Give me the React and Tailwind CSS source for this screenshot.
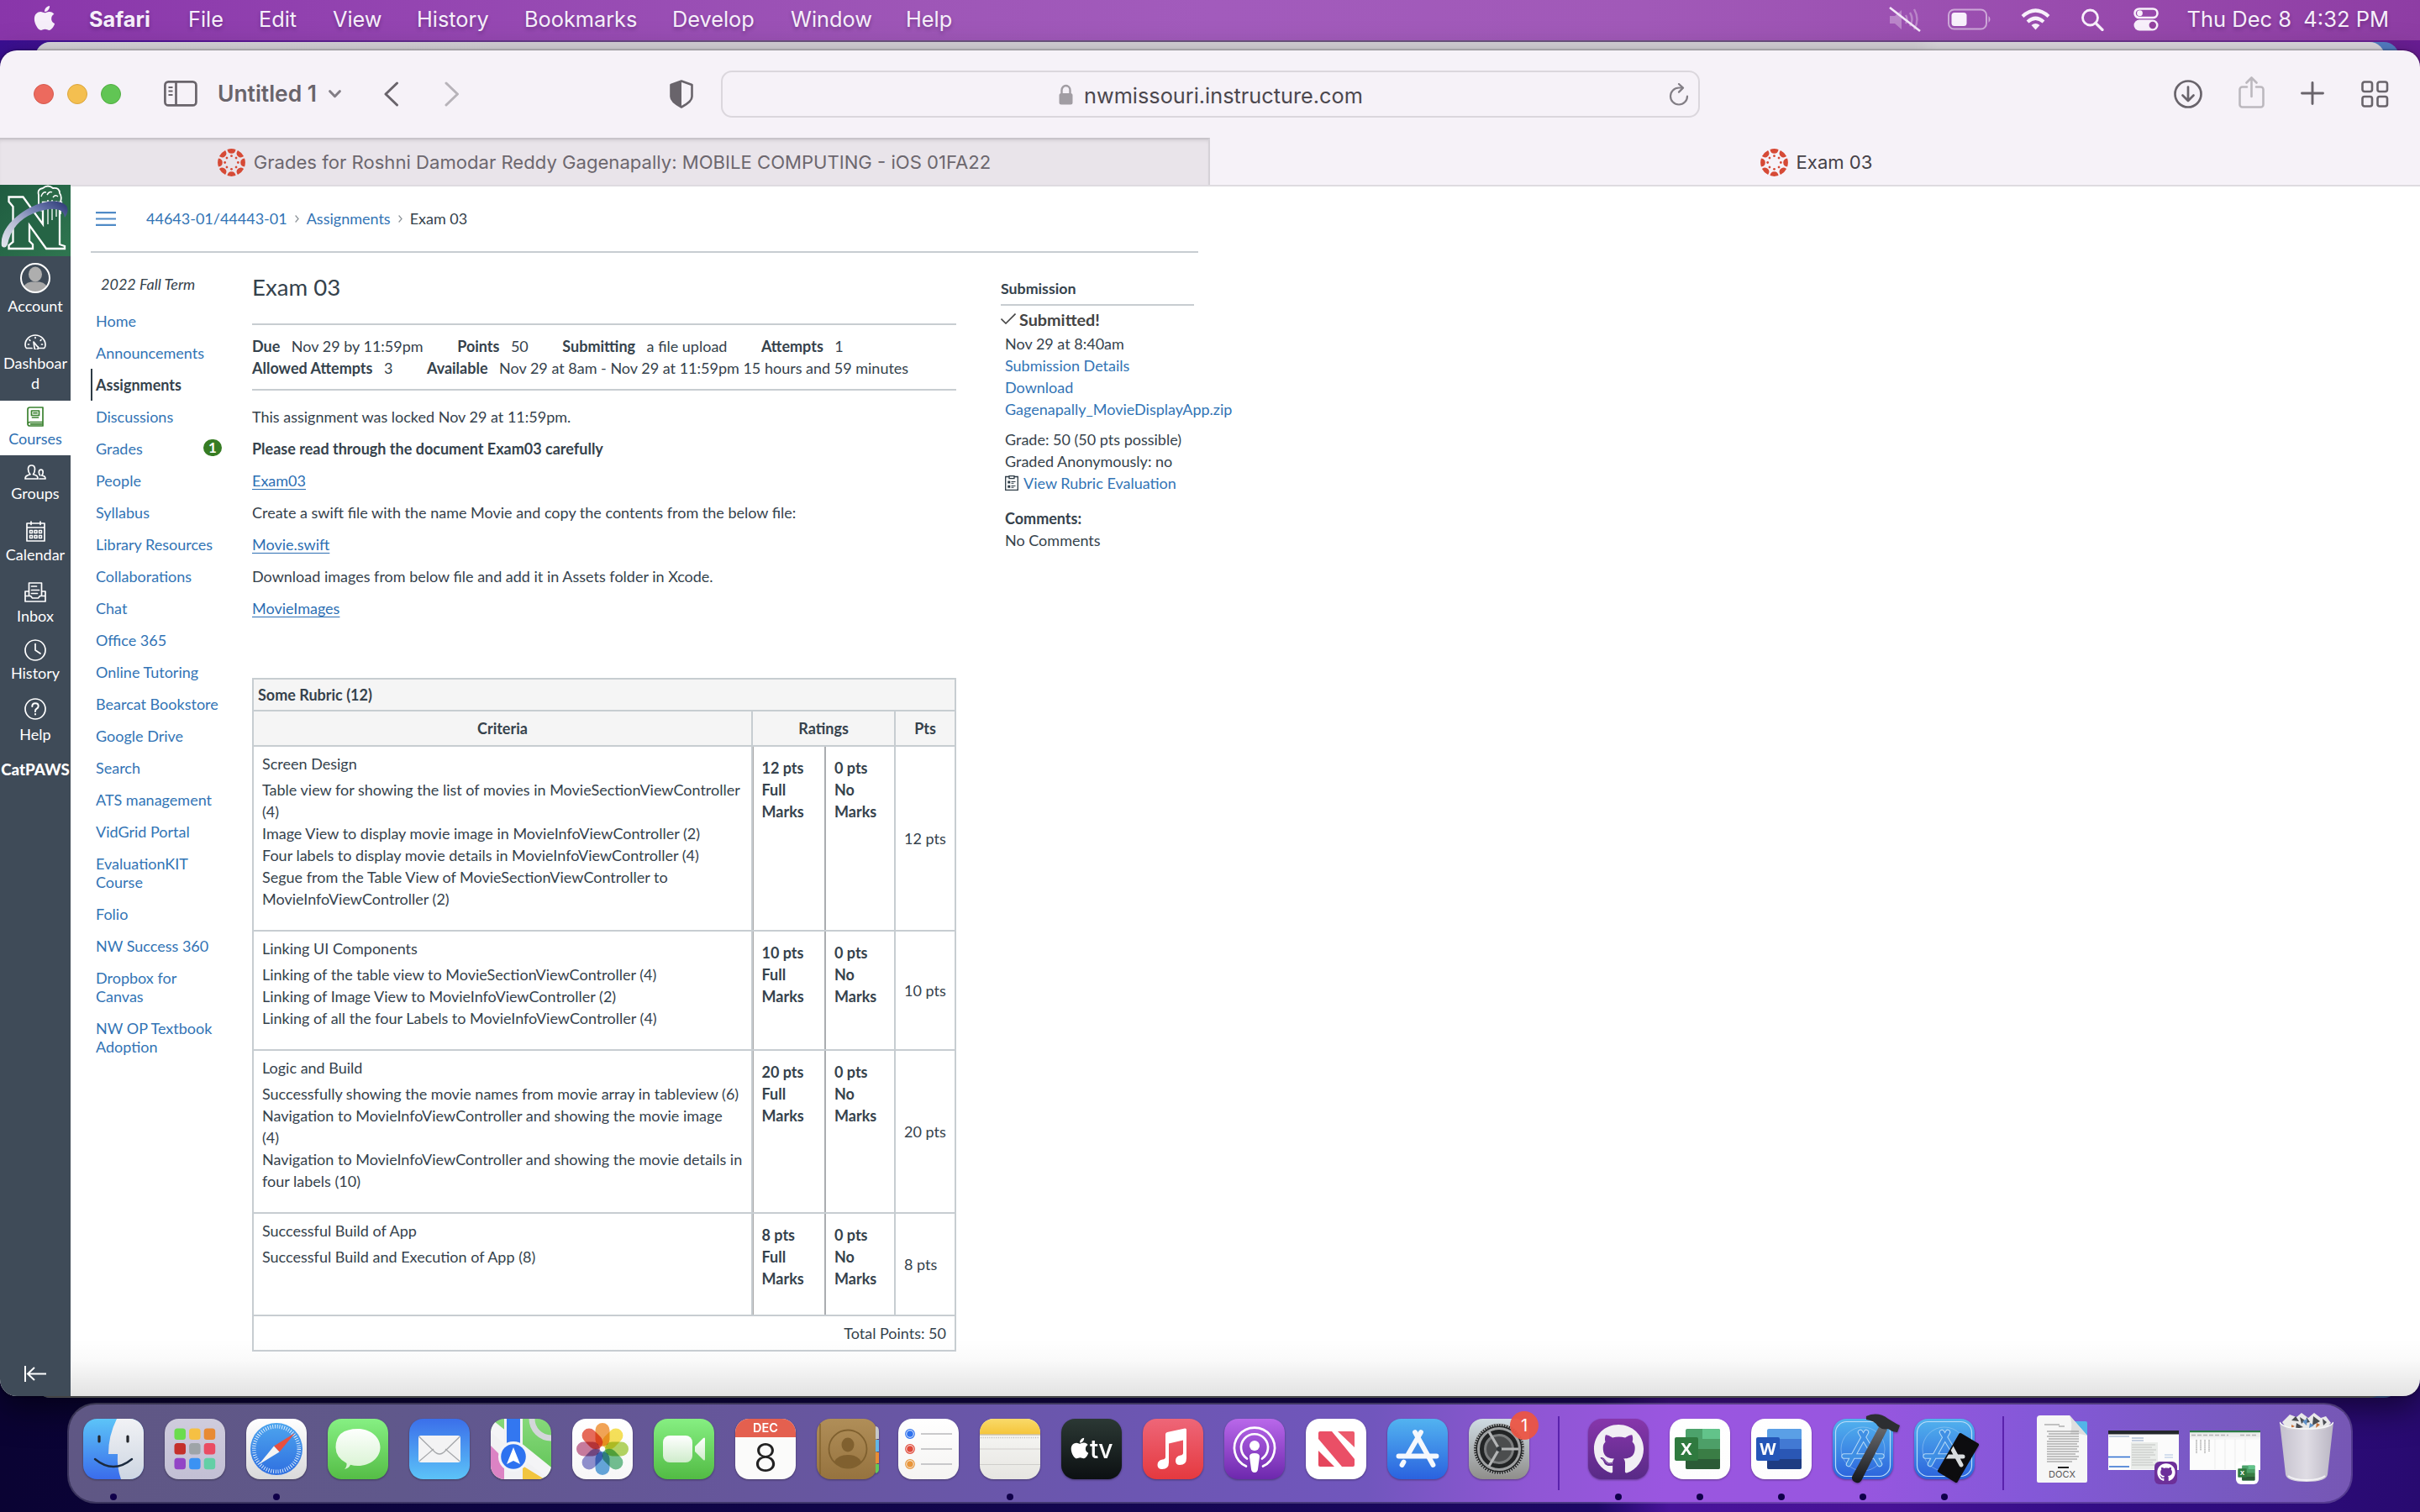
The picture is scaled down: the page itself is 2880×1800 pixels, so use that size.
import React from "react";
import { FaApple, FaGithub } from "react-icons/fa";

/* ---------- menu bar ---------- */

const MENUS = [
  ["Safari", "w-[118px] font-bold"],
  ["File", "w-[84px]"],
  ["Edit", "w-[88px]"],
  ["View", "w-[100px]"],
  ["History", "w-[128px]"],
  ["Bookmarks", "w-[176px]"],
  ["Develop", "w-[141px]"],
  ["Window", "w-[137px]"],
  ["Help", "w-[80px]"],
];

function MenuBar() {
  return (
    <div className="flex h-[48px] shrink-0 items-center justify-between bg-[linear-gradient(90deg,#8936aa_0%,#9445b1_17%,#9e56b7_38%,#a25bbc_50%,#a159b8_68%,#994cae_85%,#8e3da4_100%)] pb-[2px] text-[25.3px] text-[#f6effa] [text-shadow:0_3px_4px_rgba(40,0,60,0.3)]">
      <div className="flex items-center pl-[38px]">
        <FaApple className="mr-[38px] h-[33px] w-[30px] -mt-[3px]" />
        {MENUS.map(([label, cls]) => (
          <span key={label} className={cls}>{label}</span>
        ))}
      </div>
      <div className="flex items-center pr-[37px]">
        <svg className="mr-[31px] h-[32px] w-[40px]" viewBox="0 0 40 32" fill="none">
          <path d="M2 12h6l8-7v23l-8-7H2z" fill="#fff" opacity=".3" />
          <path d="M21 11q3 5 0 10M26 8q5 8 0 16M31 4q7 12 0 24" stroke="#fff" strokeWidth="2.4" opacity=".3" />
          <path d="M2 2l36 28" stroke="#f3e8f8" strokeWidth="2.6" />
        </svg>
        <svg className="mr-[36px] h-[26px] w-[51px]" viewBox="0 0 51 26" fill="none">
          <rect x="1" y="1.5" width="45" height="23" rx="6.5" stroke="#fff" strokeWidth="2" opacity=".5" />
          <path d="M48.500 9v8q2-1.500 2-4t-2-4z" fill="#fff" opacity=".5" />
          <rect x="4.500" y="5" width="18" height="16" rx="3.500" fill="#f8f0fb" />
        </svg>
        <svg className="mr-[36px] h-[26px] w-[35px]" viewBox="0 0 35 26" fill="none" stroke="#f8f0fb" strokeWidth="4.200">
          <path d="M2 9.500Q17.500-4.500 33 9.500" />
          <path d="M8 16Q17.500 7.500 27 16" />
          <path d="M17.500 25.500l-5-5.500q5-4 10 0z" fill="#f8f0fb" stroke="none" />
        </svg>
        <svg className="mr-[35px] h-[27px] w-[28px]" viewBox="0 0 28 27" fill="none" stroke="#f8f0fb" strokeWidth="2.800">
          <circle cx="11.500" cy="11" r="9" />
          <path d="M18 17.500l8 8" strokeLinecap="round" strokeWidth="3.200" />
        </svg>
        <svg className="mr-[33px] h-[28px] w-[30px]" viewBox="0 0 30 28" fill="none">
          <rect x="1.500" y="1.500" width="27" height="10.500" rx="5.250" stroke="#f8f0fb" strokeWidth="2.600" />
          <circle cx="7.500" cy="6.750" r="3.400" fill="#f8f0fb" />
          <rect x="0.500" y="14.500" width="29" height="13" rx="6.500" fill="#f8f0fb" />
          <circle cx="22.800" cy="21" r="4.200" fill="#93429f" />
        </svg>
        <span className="whitespace-pre text-[25.5px]">Thu Dec 8  4:32 PM</span>
      </div>
    </div>
  );
}

/* ---------- Safari chrome ---------- */

function CanvasMark() {
  const turns = [0, 45, 90, 135, 180, 225, 270, 315];
  return (
    <svg className="h-[33px] w-[33px]" viewBox="-16 -16 32 32" fill="#d64a36">
      {turns.map((a) => (
        <g key={a} transform={`rotate(${a})`}>
          <path d="M-4.900-15.100A15.900 15.900 0 0 1 4.900-15.100Q4.200-10.400 0-10.400T-4.900-15.100z" />
          <circle cx="0" cy="-7.600" r="1.350" />
        </g>
      ))}
    </svg>
  );
}

function Toolbar() {
  return (
    <div className="flex h-[104px] shrink-0 items-center bg-[#f6f2f8]">
      <div className="flex w-[858px] items-center pl-[40px]">
        <span className="mr-[16px] size-[24px] rounded-full border border-[#d65a4e] bg-[#ec6a5e]" />
        <span className="mr-[16px] size-[24px] rounded-full border border-[#dba63e] bg-[#f4bf50]" />
        <span className="mr-[51px] size-[24px] rounded-full border border-[#51ae42] bg-[#61c554]" />
        <svg className="h-[31px] w-[40px]" viewBox="0 0 40 31" fill="none" stroke="#69646b" strokeWidth="2.700">
          <rect x="1.400" y="1.400" width="37" height="28" rx="4" />
          <path d="M14.500 1.500v28" />
          <path d="M5.500 8h5M5.500 12.500h5M5.500 17h5" strokeWidth="2" />
        </svg>
        <span className="ml-[24px] w-[132px] text-[26.400px] font-semibold text-[#69646b]">Untitled 1</span>
        <svg className="h-[10px] w-[15px]" viewBox="0 0 15 10" fill="none" stroke="#827d85" strokeWidth="3" strokeLinecap="round" strokeLinejoin="round"><path d="M1.700 1.700l5.800 6 5.800-6" /></svg>
        <svg className="ml-[51px] h-[30px] w-[18px]" viewBox="0 0 18 30" fill="none" stroke="#69646b" strokeWidth="3" strokeLinecap="round" strokeLinejoin="round"><path d="M15.500 2L2 15l13.500 13" /></svg>
        <svg className="ml-[54px] h-[30px] w-[18px]" viewBox="0 0 18 30" fill="none" stroke="#b7b3b9" strokeWidth="3" strokeLinecap="round" strokeLinejoin="round"><path d="M2 2l13.500 13L2 28" /></svg>
        <svg className="ml-[250px] h-[34px] w-[28px]" viewBox="0 0 28 34" fill="none">
          <path d="M14 1.500L26.500 6v14q0 6-12.500 12.500Q1.500 26 1.500 20V6z" stroke="#69646b" strokeWidth="2.600" strokeLinejoin="round" />
          <path d="M14 1.500v31Q1.500 26 1.500 20V6z" fill="#69646b" />
        </svg>
      </div>
      <div className="flex h-[56px] w-[1165px] items-center rounded-[13px] border-2 border-[#dbd7dd] text-[25.300px] text-[#4c484e]">
        <svg className="ml-[400px] h-[25px] w-[17px]" viewBox="0 0 17 25" fill="none">
          <path d="M3.500 12V7.500a5 5.500 0 0 1 10 0V12" stroke="#a19da3" strokeWidth="2.400" />
          <rect x="0.500" y="11" width="16" height="13.500" rx="2.500" fill="#a19da3" />
        </svg>
        <span className="ml-[13px] pt-[3px]">nwmissouri.instructure.com</span>
        <svg className="ml-auto mr-[11px] h-[27px] w-[24px]" viewBox="0 0 24 27" fill="none" stroke="#827e85" strokeWidth="2.200" strokeLinecap="round" strokeLinejoin="round">
          <path d="M22 15.500A10 10 0 1 1 12 5.500h4" />
          <path d="M12 1l5 4.600-5 5" />
        </svg>
      </div>
      <div className="flex flex-1 items-center justify-end pr-[37px]">
        <svg className="mr-[42px] h-[36px] w-[36px]" viewBox="0 0 36 36" fill="none" stroke="#69646b" strokeWidth="2.700" strokeLinecap="round" strokeLinejoin="round">
          <circle cx="18" cy="18" r="15.500" />
          <path d="M18 9.500v16M11.500 19.500l6.500 6.500 6.500-6.500" />
        </svg>
        <svg className="mr-[43px] -mt-[4px] h-[38px] w-[31px]" viewBox="0 0 31 38" fill="none" stroke="#bcb8be" strokeWidth="2.600" strokeLinecap="round" strokeLinejoin="round">
          <path d="M10 12.500H4.500a3 3 0 0 0-3 3v18a3 3 0 0 0 3 3h22a3 3 0 0 0 3-3v-18a3 3 0 0 0-3-3H21" />
          <path d="M15.500 24V2M9.500 7.500l6-6 6 6" />
        </svg>
        <svg className="mr-[44px] -mt-[2px] h-[28px] w-[28px]" viewBox="0 0 28 28" stroke="#69646b" strokeWidth="2.900" strokeLinecap="round"><path d="M14 1.500v25M1.500 14h25" /></svg>
        <svg className="h-[32px] w-[33px]" viewBox="0 0 33 32" fill="none" stroke="#69646b" strokeWidth="2.600">
          <rect x="1.500" y="1.500" width="11.500" height="11.500" rx="2.500" />
          <rect x="19.500" y="1.500" width="11.500" height="11.500" rx="2.500" />
          <rect x="1.500" y="19" width="11.500" height="11.500" rx="2.500" />
          <rect x="19.500" y="19" width="11.500" height="11.500" rx="2.500" />
        </svg>
      </div>
    </div>
  );
}

function TabBar() {
  return (
    <div className="flex h-[58px] shrink-0 border-b-2 border-[#dedbe0] bg-[#f6f2f8] text-[22.100px]">
      <div className="flex w-[1440px] items-center justify-center gap-[10px] border-r-2 border-t-2 border-r-[#d5d1d7] border-t-[#c8c4ca] bg-[#e9e4ea] text-[#6c676e] shadow-[inset_0_3px_4px_-2px_rgba(0,0,0,0.12)]">
        <CanvasMark />
        <span className="pt-[1px]">Grades for Roshni Damodar Reddy Gagenapally: MOBILE COMPUTING - iOS 01FA22</span>
      </div>
      <div className="flex w-[1440px] items-center justify-center gap-[10px] pl-[3px] pt-[2px] text-[#454147]">
        <CanvasMark />
        <span className="pt-[1px]">Exam 03</span>
      </div>
    </div>
  );
}

/* ---------- Canvas global navigation ---------- */

function SchoolLogo() {
  return (
    <svg className="h-[85px] w-[84px] shrink-0" viewBox="0 0 84 85">
      <defs>
        <linearGradient id="swoosh" x1="0" y1="1" x2="1" y2="0">
          <stop offset="0" stopColor="#e6e8ef" />
          <stop offset=".35" stopColor="#b9bfd6" />
          <stop offset=".7" stopColor="#6a77ad" />
          <stop offset="1" stopColor="#27346f" />
        </linearGradient>
        <linearGradient id="logoBg" x1="0" y1="0" x2="1" y2="1">
          <stop offset="0" stopColor="#1f5c40" />
          <stop offset="1" stopColor="#2f7650" />
        </linearGradient>
      </defs>
      <rect width="84" height="85" fill="url(#logoBg)" />
      <path d="M46 30V12q-2-7 5-8 6-5 12 0 8-1 8 6 3 4 1 10v14z" fill="#2b6a48" stroke="#fff" strokeWidth="1.800" />
      <path d="M49 14q2-6 6-5M56 12q3-5 6-3M63 15q3-4 6-1M52 20v12M57 18v14M62 18v14M67 19v12" stroke="#fff" strokeWidth="1.500" fill="none" />
      <path d="M10.500 14.500h17L51 47V21h22v5l-2 2v43l6 2v3H55L35 48v19l4 4v5H10.500v-4l5-4V26l-5-6z" fill="#256445" stroke="#fff" strokeWidth="2.300" />
      <path d="M51 47V22M57 22v25M62 22v20M67 22v16" stroke="#fff" strokeWidth="1.300" />
      <path d="M2 73C-3 40 60 6 79 25q4 6-2 14Q76 27 58 29 16 36 9 71q-3 6-7 2z" fill="url(#swoosh)" />
    </svg>
  );
}

const ico = { fill: "none", stroke: "currentColor", strokeWidth: 1.7, strokeLinejoin: "round", strokeLinecap: "round" };

const NavIcons = {
  Account: (
    <svg className="size-[36px] shrink-0" viewBox="0 0 36 36">
      <defs><clipPath id="av"><circle cx="18" cy="18" r="16.500" /></clipPath></defs>
      <g clipPath="url(#av)">
        <ellipse cx="18" cy="13.500" rx="8" ry="9" fill="#aeaeae" />
        <path d="M1 36q2-12 12-13.500h10Q33 24 35 36z" fill="#a8a8a8" />
      </g>
      <circle cx="18" cy="18" r="17" fill="none" stroke="#fff" strokeWidth="2" />
    </svg>
  ),
  Dashboard: (
    <svg className="h-[18px] w-[26px] shrink-0" viewBox="0 0 26 18" {...ico}>
      <path d="M9 16.500H2.500Q1 15.500 1 12.500a12 11.500 0 0 1 24 0q0 3-1.500 4H17" />
      <path d="M11 9l4 5a2.200 2.200 0 1 1-3 2z" />
      <path d="M13 3.500v1M6 6.500l.8.800M20 6.500l-.8.800M4.500 12h1M20.500 12h1" />
    </svg>
  ),
  Courses: (
    <svg className="h-[24px] w-[20px] shrink-0 text-[#3b8230]" viewBox="0 0 20 24" {...ico}>
      <path d="M19 1H3.500Q1 1 1 3.500v17Q1 23 3.500 23H19v-4.500H3.500Q1 18.500 1 21M19 1v17.500M4.500 20.800h13" />
      <path d="M5.500 5h9v5.500h-9zM6.500 13h7M8 7.700h4" />
    </svg>
  ),
  Groups: (
    <svg className="h-[18px] w-[26px] shrink-0" viewBox="0 0 26 18" {...ico}>
      <path d="M1 17q0-3.500 3-4.200l3-1Q4.500 9 4.500 5.500 4.500 1 8.500 1t4 4.500Q12.500 9 10.500 11.800l3 1Q16 13.500 16 17z" />
      <path d="M18 17h7q0-3-2.500-3.500L20.700 13q1.500-1.600 1.500-4 0-2.800-2.400-2.800T17.300 9q0 2.400 1.500 4" />
    </svg>
  ),
  Calendar: (
    <svg className="h-[25px] w-[23px] shrink-0" viewBox="0 0 23 25" {...ico}>
      <path d="M1 3h21v21H1zM1 8h21M6 1v3.500M17 1v3.500" />
      <path d="M4.500 11.500h3v3h-3zM10 11.500h3v3h-3zM15.500 11.500h3v3h-3zM4.500 17.500h3v3h-3zM10 17.500h3v3h-3zM15.500 17.500h3v3h-3z" strokeWidth="1.500" />
    </svg>
  ),
  Inbox: (
    <svg className="h-[24px] w-[26px] shrink-0" viewBox="0 0 26 24" {...ico}>
      <path d="M5.500 16V1h15v15M5.500 11H1v12h24V11h-4.500M1 16.500h6.500l2 2.500h7l2-2.500H25" />
      <path d="M8.500 5h6M8.500 9.500h9M8.500 13.500h7" />
    </svg>
  ),
  History: (
    <svg className="size-[26px] shrink-0" viewBox="0 0 26 26" {...ico}>
      <circle cx="13" cy="13" r="12" />
      <path d="M13 5.500V13l6 4" />
    </svg>
  ),
  Help: (
    <svg className="size-[26px] shrink-0" viewBox="0 0 26 26" {...ico}>
      <circle cx="13" cy="13" r="12" />
      <path d="M9.300 10q0-3.800 3.700-3.800t3.700 3.300q0 2-2 3.200T13 16M13 19v.4" strokeWidth="2" />
    </svg>
  ),
};

const GLOBAL_NAV = [
  ["Account", "Account", "h-[82px] pt-[8px] gap-[3px]"],
  ["Dashboard", "Dashboar\nd", "h-[90px] pt-[11px] gap-[4px]"],
  ["Courses", "Courses", "h-[65px] pt-[7px] gap-[2px] bg-white text-[#2d6fb3]"],
  ["Groups", "Groups", "h-[66px] pt-[11px] gap-[4px]"],
  ["Calendar", "Calendar", "h-[73px] pt-[12px] gap-[3px]"],
  ["Inbox", "Inbox", "h-[68px] pt-[12px] gap-[4px]"],
  ["History", "History", "h-[70px] pt-[12px] gap-[2px]"],
  ["Help", "Help", "h-[72px] pt-[12px] gap-[5px]"],
];

function GlobalNav() {
  return (
    <div className="-mt-[2px] flex w-[84px] shrink-0 flex-col bg-[#3f4b58] text-center leading-[24px] text-white">
      <SchoolLogo />
      {GLOBAL_NAV.map(([key, label, cls]) => (
        <div key={key} className={`flex shrink-0 flex-col items-center whitespace-pre ${cls}`}>
          {NavIcons[key]}
          <span>{label}</span>
        </div>
      ))}
      <span className="mt-[13px] text-[18.700px] font-black">CatPAWS</span>
      <svg className="mb-[17px] ml-[28px] mt-auto h-[19px] w-[27px]" viewBox="0 0 27 19" fill="none" stroke="#fff" strokeWidth="2"><path d="M2 0v19M5 9.500h22M13 2L5 9.500l8 7.500" /></svg>
    </div>
  );
}

/* ---------- course page ---------- */

const COURSE_NAV = [
  "Home", "Announcements", "Assignments", "Discussions", "Grades", "People", "Syllabus", "Library Resources",
  "Collaborations", "Chat", "Office 365", "Online Tutoring", "Bearcat Bookstore", "Google Drive", "Search",
  "ATS management", "VidGrid Portal", "EvaluationKIT Course", "Folio", "NW Success 360", "Dropbox for Canvas",
  "NW OP Textbook Adoption",
];

function CourseNav() {
  return (
    <div className="w-[168px] shrink-0 pt-[26px] leading-[22px]">
      <div className="mb-[14px] pl-[12px] italic">2022 Fall Term</div>
      {COURSE_NAV.map((item) =>
        item === "Assignments" ? (
          <div key={item} className="border-l-2 border-[#2d3b45] py-[8px] pl-[4px] font-bold">{item}</div>
        ) : (
          <div key={item} className="flex items-center justify-between py-[8px] pl-[6px] pr-[12px] text-[#3274b5]">
            <span className="max-w-[150px]">{item}</span>
            {item === "Grades" && (
              <span className="-mt-[2px] flex h-[20px] w-[22px] items-center justify-center rounded-full bg-[#367c23] text-[17px] font-bold text-white">1</span>
            )}
          </div>
        )
      )}
    </div>
  );
}

function Fact({ label, value }) {
  return (
    <span className="mr-[40.500px] whitespace-nowrap">
      <b className="mr-[13.500px]">{label}</b>
      {value}
    </span>
  );
}

const RUBRIC = [
  {
    h: "h-[220px]", pts: "12 pts", name: "Screen Design",
    lines: [
      "Table view for showing the list of movies in MovieSectionViewController (4)",
      "Image View to display movie image in MovieInfoViewController (2)",
      "Four labels to display movie details in MovieInfoViewController (4)",
      "Segue from the Table View of MovieSectionViewController to MovieInfoViewController (2)",
    ],
  },
  {
    h: "h-[142px]", pts: "10 pts", name: "Linking UI Components",
    lines: [
      "Linking of the table view to MovieSectionViewController (4)",
      "Linking of Image View to MovieInfoViewController (2)",
      "Linking of all the four Labels to MovieInfoViewController (4)",
    ],
  },
  {
    h: "h-[194px]", pts: "20 pts", name: "Logic and Build",
    lines: [
      "Successfully showing the movie names from movie array in tableview (6)",
      "Navigation to MovieInfoViewController and showing the movie image\n(4)",
      "Navigation to MovieInfoViewController and showing the movie details in four labels (10)",
    ],
  },
  { h: "h-[122px]", pts: "8 pts", name: "Successful Build of App", lines: ["Successful Build and Execution of App (8)"] },
];

function Rubric() {
  return (
    <div className="mt-[56px] border-2 border-[#c7cdd1]">
      <div className="flex h-[38px] items-center border-b-2 border-[#c7cdd1] bg-[#f5f5f5] pl-[5px] font-bold">Some Rubric (12)</div>
      <div className="flex h-[42px] border-b-2 border-[#c7cdd1] bg-[#f5f5f5] text-center font-bold leading-[40px]">
        <div className="w-[594px] border-r-2 border-[#c7cdd1]">Criteria</div>
        <div className="w-[170px] border-r-2 border-[#c7cdd1]">Ratings</div>
        <div className="w-[70px]">Pts</div>
      </div>
      {RUBRIC.map((r) => (
        <div key={r.name} className={`flex border-b-2 border-[#c7cdd1] ${r.h}`}>
          <div className="w-[594px] border-r-2 border-[#c7cdd1] pl-[10px] pr-[8px] pt-[7px]">
            <div className="mb-[5px]">{r.name}</div>
            {r.lines.map((l) => <div key={l} className="whitespace-pre-line">{l}</div>)}
          </div>
          <div className="w-[87px] border-l border-r-2 border-l-[#aaa] border-r-[#aaadb0] pl-[9.500px] pt-[12px] font-bold">
            {r.pts}<br />Full<br />Marks
          </div>
          <div className="w-[83px] border-r-2 border-[#c7cdd1] pl-[10px] pt-[12px] font-bold">0 pts<br />No<br />Marks</div>
          <div className="flex w-[70px] items-center pl-[10px]">{r.pts}</div>
        </div>
      ))}
      <div className="h-[40px] pr-[10px] text-right leading-[40px]">Total Points: 50</div>
    </div>
  );
}

function Assignment() {
  return (
    <div className="ml-[24px] w-[838px] shrink-0 pt-[23px]">
      <h1 className="text-[27.600px] leading-[36px]">Exam 03</h1>
      <div className="mt-[25px] h-[80px] border-y-2 border-[#c7cdd1] pt-[12px]">
        <div>
          <Fact label="Due" value="Nov 29 by 11:59pm" />
          <Fact label="Points" value="50" />
          <Fact label="Submitting" value="a file upload" />
          <Fact label="Attempts" value="1" />
        </div>
        <div>
          <Fact label="Allowed Attempts" value="3" />
          <Fact label="Available" value="Nov 29 at 8am - Nov 29 at 11:59pm 15 hours and 59 minutes" />
        </div>
      </div>
      <div className="mt-[18px] flex flex-col items-start gap-[12px]">
        <p>This assignment was locked Nov 29 at 11:59pm.</p>
        <p className="font-bold">Please read through the document Exam03 carefully</p>
        <a className="text-[#2d6fb3] underline underline-offset-[3px]">Exam03</a>
        <p>Create a swift file with the name Movie and copy the contents from the below file:</p>
        <a className="text-[#2d6fb3] underline underline-offset-[3px]">Movie.swift</a>
        <p>Download images from below file and add it in Assets folder in Xcode.</p>
        <a className="text-[#2d6fb3] underline underline-offset-[3px]">MovieImages</a>
      </div>
      <div className="pt-[14px]"><Rubric /></div>
    </div>
  );
}

function Submission() {
  return (
    <div className="ml-[53px] w-[290px] shrink-0 pt-[29px]">
      <div className="h-[34px] w-[230px] border-b-2 border-[#c7cdd1] text-[17.800px] font-bold">Submission</div>
      <div className="mt-[3px] flex h-[29px] items-start text-[19.800px] font-bold text-[#444]">
        <svg className="mr-[4px] mt-[6px] h-[13px] w-[18px]" viewBox="0 0 18 13" fill="none" stroke="#444" strokeWidth="1.600"><path d="M.5 6.500l5.500 5.500L17.500.5" /></svg>
        Submitted!
      </div>
      <div className="pl-[5px]">
        <div>Nov 29 at 8:40am</div>
        <div className="text-[#3274b5]">Submission Details<br />Download<br />Gagenapally_MovieDisplayApp.zip</div>
        <div className="mt-[10px]">Grade: 50 (50 pts possible)</div>
        <div>Graded Anonymously: no</div>
        <div className="flex items-center text-[#3274b5]">
          <svg className="mr-[6px] h-[18px] w-[16px]" viewBox="0 0 16 18" fill="none" stroke="#2d3b45" strokeWidth="1.300">
            <path d="M5 1.500H.7v15.800h14.600V1.500H11M5 .7h6v3H5z" />
            <path d="M7.500 7.500h5M7.500 9.300h3M7.500 12.500h5M7.500 14.300h3" strokeWidth="1" />
            <path d="M3.300 6.500h3v3h-3zM3.300 11.700h3v3h-3z" fill="#2d3b45" stroke="none" />
          </svg>
          View Rubric Evaluation
        </div>
        <div className="mt-[16px] font-bold">Comments:</div>
        <div>No Comments</div>
      </div>
    </div>
  );
}

function Page() {
  return (
    <div className="flex min-h-0 flex-1 bg-white font-['Lato',sans-serif] text-[18px] leading-[26px] text-[#35424c]">
      <GlobalNav />
      <div className="flex flex-1 flex-col bg-[linear-gradient(180deg,transparent_1371px,rgba(0,0,0,0.02)_1397px,rgba(0,0,0,0.115)_1440px)]">
        <div className="ml-[24px] flex h-[79px] w-[1318px] items-center border-b-2 border-[#c7cdd1] pb-[1px] pl-[6px]">
          <svg className="mr-[36px] h-[17px] w-[24px]" viewBox="0 0 24 17" stroke="#4f8ac6" strokeWidth="2.200"><path d="M0 1.200h24M0 8.500h24M0 15.800h24" /></svg>
          <span className="text-[#3274b5]">44643-01/44443-01</span>
          <svg className="mx-[9px] h-[9px] w-[5px]" viewBox="0 0 5 9" fill="none" stroke="#8b9196" strokeWidth="1.200"><path d="M.6.5l3.500 4-3.500 4" /></svg>
          <span className="text-[#3274b5]">Assignments</span>
          <svg className="mx-[9px] h-[9px] w-[5px]" viewBox="0 0 5 9" fill="none" stroke="#8b9196" strokeWidth="1.200"><path d="M.6.5l3.500 4-3.500 4" /></svg>
          <span>Exam 03</span>
        </div>
        <div className="ml-[24px] flex items-start">
          <CourseNav />
          <Assignment />
          <Submission />
        </div>
      </div>
    </div>
  );
}

/* ---------- dock ---------- */

function Grad({ id, from, to }) {
  return (
    <linearGradient id={id} x1="0" y1="0" x2="0" y2="1">
      <stop offset="0" stopColor={from} />
      <stop offset="1" stopColor={to} />
    </linearGradient>
  );
}

/* Rounded app tile with a vertical gradient; children draw in 72x72 units. */
function Tile({ id, from, to, children }) {
  return (
    <svg className="size-[72px] overflow-visible drop-shadow-[0_1px_1px_rgba(0,0,0,0.35)]" viewBox="0 0 72 72" fill="none">
      <defs>
        <Grad id={`g-${id}`} from={from} to={to} />
        <clipPath id={`c-${id}`}><rect width="72" height="72" rx="16.500" /></clipPath>
      </defs>
      <rect width="72" height="72" rx="16.500" fill={`url(#g-${id})`} />
      {children}
    </svg>
  );
}

const Finder = () => (
  <Tile id="finder" from="#5cc4f8" to="#3a6ceb">
    <defs><Grad id="face" from="#f1f2f5" to="#cdd6e2" /></defs>
    <path clipPath="url(#c-finder)" d="M40 0Q30 20 30 42h11q-1 16 4 30h27V0z" fill="url(#face)" />
    <path d="M19 21v6M53 21v6" stroke="#23262b" strokeWidth="3.200" strokeLinecap="round" />
    <path d="M14 48q22 18 44 0" stroke="#1b2a3e" strokeWidth="2.400" strokeLinecap="round" />
  </Tile>
);

const LP = ["#6bdc4e", "#f6c043", "#e88a34", "#c4302a", "#9ea4a8", "#ea4c63", "#9244c6", "#3b92f3", "#63cfa6"];
const Launchpad = () => (
  <Tile id="lp" from="#cfccdd" to="#c2bfd4">
    {LP.map((c, i) => <rect key={c} x={11.5 + (i % 3) * 17.6} y={11.5 + Math.floor(i / 3) * 17.6} width="13.500" height="13.500" rx="3.500" fill={c} />)}
  </Tile>
);

const SafariIcon = () => (
  <Tile id="saf" from="#ffffff" to="#d9d9da">
    <defs><Grad id="sea" from="#4da5ee" to="#2f6fe0" /></defs>
    <circle cx="36" cy="36" r="31" fill="url(#sea)" />
    <circle cx="36" cy="36" r="26.800" stroke="#e8f3fd" strokeWidth="4.600" strokeDasharray="0.900 1.906" />
    <path d="M58 17L39.500 39.500 33 32.500z" fill="#e8503f" />
    <path d="M15 54.500L33 32.500 39.500 39.500z" fill="#f4f4f4" />
  </Tile>
);

const Messages = () => (
  <Tile id="msg" from="#86f083" to="#55bd46">
    <defs><Grad id="bub" from="#fdfffd" to="#d8f3d2" /></defs>
    <path d="M36 12c15 0 26.500 9.800 26.500 22S51 56 36 56q-5 0-9-1.200Q25 59 20 60q3-3 2.500-7Q9.500 46 9.500 34 9.500 12 36 12z" fill="url(#bub)" />
  </Tile>
);

const Mail = () => (
  <Tile id="mail" from="#3b6fea" to="#5cc3f8">
    <rect x="11" y="20" width="50" height="32" rx="3" fill="#f3f3f4" />
    <path d="M12 50.500L29 36M60 50.500L43 36" stroke="#a5a7aa" strokeWidth="1.200" />
    <path d="M12 21.500L31 40q5 4 10 0L60 21.500" stroke="#a5a7aa" strokeWidth="1.400" />
  </Tile>
);

const Maps = () => (
  <Tile id="map" from="#86d97a" to="#5fc255">
    <g clipPath="url(#c-map)">
      <path d="M0 14L72 72H0z" fill="#f1f1f3" />
      <path d="M0 32l16 16v24H0z" fill="#dc83c4" />
      <path d="M38 56l26 16H38z" fill="#f2c53f" />
      <path d="M0 8l72 58" stroke="#f4f4f6" strokeWidth="13" />
      <rect x="16" y="0" width="22" height="72" fill="#f1f1f4" />
      <rect x="19" y="0" width="16" height="40" fill="#3377f0" />
      <circle cx="72" cy="0" r="23" stroke="#d3d6da" strokeWidth="7" />
    </g>
    <circle cx="27" cy="45" r="18" fill="#f3f4f8" />
    <circle cx="27" cy="45" r="14.800" fill="#2e72f0" />
    <path d="M27 34l8 20-8-4-8 4z" fill="#fff" />
  </Tile>
);

const PETALS = ["#f0953a", "#f5dc3e", "#a9cf4a", "#5db780", "#4d9ad8", "#7f7fc8", "#c0668f", "#e4523f"];
const Photos = () => (
  <Tile id="ph" from="#ffffff" to="#f7f7f7">
    {PETALS.map((c, i) => (
      <rect key={c} className="mix-blend-multiply" x="27.500" y="5" width="17" height="28" rx="8.500" fill={c} opacity=".86" transform={`rotate(${i * 45} 36 36)`} />
    ))}
  </Tile>
);

const FaceTime = () => (
  <Tile id="ft" from="#86ef82" to="#52bb44">
    <defs><Grad id="cam" from="#ffffff" to="#cfeccb" /></defs>
    <rect x="11" y="20" width="35" height="32" rx="8" fill="url(#cam)" />
    <path d="M49 33l10-10q2-1.500 2 1v24q0 2.500-2 1L49 39z" fill="url(#cam)" />
  </Tile>
);

const Calendar = () => (
  <div className="flex size-[72px] flex-col items-center rounded-[16.500px] bg-[#fbfbfa] drop-shadow-[0_1px_1px_rgba(0,0,0,0.35)]">
    <div className="flex h-[22px] w-full items-center justify-center rounded-t-[16.500px] bg-[#e4604f] pt-[1px] text-[14.500px] font-semibold leading-none text-white">DEC</div>
    <div className="text-[46px] font-light leading-[48px] text-[#222]">8</div>
  </div>
);

const Contacts = () => (
  <Tile id="con" from="#b08e58" to="#96733f">
    <path d="M70 9q4 0 4 6v9h-4z" fill="#c6c8ca" />
    <path d="M70 25h4v14h-4z" fill="#61b6e8" />
    <path d="M70 40h4v13h-4z" fill="#e88d35" />
    <path d="M70 54h4v6q0 4-4 5z" fill="#63c957" />
    <path d="M4 6v60" stroke="#84652f" strokeWidth="1.500" />
    <circle cx="37" cy="36" r="22.500" stroke="#7f602f" strokeWidth="1.800" />
    <ellipse cx="37" cy="31" rx="7.500" ry="8.500" fill="#80602f" />
    <path d="M21 51q4-8 16-8t16 8q-6 7-16 7t-16-7z" fill="#80602f" />
  </Tile>
);

const Reminders = () => (
  <Tile id="rem" from="#ffffff" to="#f5f4f2">
    {[["#2f72ee", 18], ["#e04a3a", 36], ["#e8953a", 54]].map(([c, y]) => (
      <g key={c}>
        <circle cx="14" cy={y} r="5.300" stroke={c} strokeWidth="1.200" />
        <circle cx="14" cy={y} r="3.800" fill={c} />
        <path d={`M27 ${y}h37`} stroke="#b9b9bb" strokeWidth="1.600" />
      </g>
    ))}
  </Tile>
);

const Notes = () => (
  <Tile id="notes" from="#fafaf8" to="#e6e5e1">
    <defs><Grad id="pad" from="#f9da6a" to="#f5c53a" /></defs>
    <path clipPath="url(#c-notes)" d="M0 0h72v18.500H0z" fill="url(#pad)" />
    <path d="M0 19h72" stroke="#b5a98a" strokeWidth="1" />
    <path d="M1 22.500h70" stroke="#b9b8b4" strokeWidth="1.500" strokeDasharray="1 1.600" />
    <path d="M0 36h72M0 54.500h72" stroke="#cfcecb" strokeWidth="1.200" />
  </Tile>
);

const TV = () => (
  <div className="flex size-[72px] items-center justify-center rounded-[16.500px] bg-[linear-gradient(180deg,#2b3834,#0c1012)] text-white drop-shadow-[0_1px_1px_rgba(0,0,0,0.35)]">
    <FaApple className="-mt-[3px] h-[28px] w-[22px]" />
    <span className="-mt-[1px] ml-[1px] text-[30px] font-medium leading-none tracking-[-0.500px]">tv</span>
  </div>
);

const Music = () => (
  <Tile id="mus" from="#ee6678" to="#e5393f">
    <path d="M27 18.500q0-2 2-2.500l21-4.500q2-.4 2 1.600V47q0 8-8 8-5 0-5-5 0-5.500 6-6.500 3-.5 3-3V25.500L31 29.500V52q0 8-8 8-5.500 0-5.500-5 0-5.500 6-6.500 3.500-.5 3.500-3z" fill="#fff" />
  </Tile>
);

const Podcasts = () => (
  <Tile id="pod" from="#b968ea" to="#6d28ad">
    <g stroke="#fff" strokeWidth="2.700" strokeLinecap="round">
      <path d="M26 56.500a24 24 0 1 1 20 0" />
      <path d="M27 47.500a16 16 0 1 1 18 0" />
    </g>
    <circle cx="36" cy="32" r="6" fill="#fff" />
    <path d="M30 45q0-4 6-4t6 4l-2 15q-.5 4-4 4t-4-4z" fill="#fff" />
  </Tile>
);

const News = () => (
  <Tile id="news" from="#ffffff" to="#ffffff">
    <path d="M15 17q0-2 2-2h14l27 33v7q0 2-2 2H43L15 24z" fill="#ea4f66" />
    <path d="M38 15h18q2 0 2 2v17z" fill="#ec5a6c" />
    <path d="M15 38v17q0 2 2 2h17z" fill="#e5465c" />
  </Tile>
);

const AppStore = () => (
  <Tile id="as" from="#52b3f0" to="#2a62df">
    <g stroke="#f5f8fd" strokeWidth="5.800" strokeLinecap="round">
      <path d="M40 16L25 42M19.500 51.500L17.500 55" />
      <path d="M33 16l21.500 39" />
      <path d="M13.500 44.500h45" />
    </g>
  </Tile>
);

const Settings = () => (
  <div className="relative">
    <Tile id="set" from="#cfdbe3" to="#8f8e8b">
      <circle cx="36" cy="36" r="30" fill="#222425" />
      <circle cx="36" cy="36" r="29" stroke="#a7a9aa" strokeWidth="3" strokeDasharray="1.600 1.400" />
      <circle cx="36" cy="36" r="24.500" stroke="#9fa1a2" strokeWidth="3" />
      <circle cx="36" cy="36" r="16.500" fill="#4b4d4e" stroke="#7b7d7e" strokeWidth="3" />
      <path d="M36 36h23M36 36L24 15.500M36 36L24 56.500" stroke="#b4b6b7" strokeWidth="3.200" />
      <circle cx="36" cy="36" r="3" fill="#33383b" />
    </Tile>
    <span className="absolute -right-[11px] -top-[9px] flex size-[34px] items-center justify-center rounded-full bg-[#eb5545]/95 text-[20px] text-white">1</span>
  </div>
);

const GitHubIcon = () => (
  <div className="flex size-[72px] items-center justify-center rounded-[16.500px] bg-[linear-gradient(180deg,#8736ab,#582a86)] drop-shadow-[0_1px_1px_rgba(0,0,0,0.35)]">
    <FaGithub className="size-[61px] text-[#f1eef4]" />
  </div>
);

const OfficeMark = ({ letter, c }) => (
  <g>
    <rect x="19" y="12" width="41" height="48" rx="2" fill={c[0]} />
    <path d="M39 12h19q2 0 2 2v10H39z" fill={c[1]} />
    <path d="M19 24h41v12H19z" fill={c[2]} />
    <path d="M19 36h41v12H19z" fill={c[3]} />
    <path d="M19 48h41v10q0 2-2 2H21q-2 0-2-2z" fill={c[4]} />
    <rect x="6" y="22" width="28" height="28" rx="2" fill={c[5]} />
    <text x="20" y="43" textAnchor="middle" fill="#fff" fontSize="20" fontWeight="700" fontFamily="Open Sans, sans-serif">{letter}</text>
  </g>
);
const XL = ["#4ca26b", "#62c38a", "#4d9f68", "#3a7d45", "#2b5b36", "#2f7a3f"];
const WD = ["#5a9fe6", "#5a9fe6", "#4279d3", "#2a57b5", "#1e3c82", "#2456b8"];
const Excel = () => <Tile id="xl" from="#ffffff" to="#fdfdfd"><OfficeMark letter="X" c={XL} /></Tile>;
const Word = () => <Tile id="wd" from="#ffffff" to="#fdfdfd"><OfficeMark letter="W" c={WD} /></Tile>;

const Blueprint = () => (
  <g stroke="#b9dcf8">
    <rect x="3.500" y="3.500" width="65" height="65" rx="13" strokeWidth="1.200" />
    <circle cx="36" cy="36" r="26" strokeWidth=".7" opacity=".6" />
    <g strokeWidth="6.500" strokeLinecap="round" opacity=".95">
      <path d="M40 16L19 54M33 16l23 38M13.500 44.500h45" />
    </g>
    <g strokeWidth="4.400" strokeLinecap="round" stroke="#3f8fe4">
      <path d="M40 16L19 54M33 16l23 38M13.500 44.500h45" />
    </g>
  </g>
);

const Xcode = () => (
  <Tile id="xc" from="#52b3ee" to="#2b62dc">
    <Blueprint />
    <defs><Grad id="handle" from="#6a6c70" to="#15171c" /></defs>
    <path d="M56 8l9 5-30 59q-2 5-7 4-6-2-5-7z" fill="url(#handle)" />
    <path d="M40-3q14-6 26 3l10 6 4 2-3 8-6-1-5-3q-6 2-12-3-4-7-14-8z" fill="#2c2e31" />
  </Tile>
);

const Simulator = () => (
  <Tile id="sim" from="#52b3ee" to="#2b62dc">
    <Blueprint />
    <defs><clipPath id="phone"><path d="M55 18L76 31 50 76 29 63z" /></clipPath></defs>
    <path d="M55 19L75 31 50 74 30 62z" fill="#0d0d0f" stroke="#0d0d0f" strokeWidth="4" strokeLinejoin="round" />
    <path clipPath="url(#phone)" d="M30 45h28M44 33l12 22" stroke="#d9dcde" strokeWidth="5" strokeLinecap="round" />
  </Tile>
);

const DocxFile = () => (
  <svg className="h-[80px] w-[60px]" viewBox="0 0 60 80">
    <rect x="2" y="7" width="58" height="30" rx="2" fill="#53b4e8" />
    <path d="M4 0h35l21 24v54q0 2-2 2H2q-2 0-2-2V4q0-4 4-4z" fill="#f6f6f6" />
    <path d="M39 0q4 10 1 22 10-1 20 2z" fill="#dedede" />
    <path d="M9 11h18M26 13h7M12 19h38M14 22h36M12 25h38M14 28h36M12 31h38M12 34h36M12 37h38M12 40h36M12 43h38M12 46h34M12 49h38M12 52h36M12 55h30" stroke="#8b8b8b" strokeWidth="1" />
    <path d="M25 62h13" stroke="#222" strokeWidth="2" />
    <text x="30" y="74" textAnchor="middle" fontSize="11" fill="#555" fontFamily="Inter, sans-serif">DOCX</text>
  </svg>
);

const GitThumb = () => (
  <div className="relative mt-[2px] h-[47px] w-[84px]">
    <svg className="h-[47px] w-[84px]" viewBox="0 0 84 47">
      <rect width="84" height="47" fill="#fbfbfb" />
      <rect width="84" height="4.500" fill="#23272c" />
      <path d="M1 7h24M28 9h14M28 12h14" stroke="#8fa5c4" strokeWidth="1" />
      <rect x="27" y="14" width="32" height="32" fill="#e9ece9" />
      <path d="M28 17h28M28 20h24M28 23h29M28 26h26M28 29h28M28 32h22M28 35h29M28 38h25M28 41h28" stroke="#b7bbb7" strokeWidth=".8" />
      <path d="M0 31.500h26M1 43h24" stroke="#2f6fd0" strokeWidth="1.600" />
      <path d="M67 29h10M67 32h10" stroke="#9db6dc" strokeWidth=".8" />
    </svg>
    <div className="absolute -bottom-[17px] right-[2px] flex size-[27px] items-center justify-center rounded-[6px] bg-[#6d2f99]">
      <FaGithub className="size-[22px] text-white" />
    </div>
  </div>
);

const SheetThumb = () => (
  <div className="relative mt-[2px] h-[47px] w-[84px]">
    <svg className="h-[47px] w-[84px]" viewBox="0 0 84 47">
      <rect width="84" height="47" fill="#fcfcfc" />
      <rect width="84" height="2.500" fill="#2b7a45" />
      <rect y="2.500" width="84" height="6" fill="#ececec" />
      <path d="M2 5.500h44M60 5.500h20" stroke="#b4b4b4" strokeWidth="1.500" strokeDasharray="5 2" />
      <path d="M8 11v16M13 11v13M18 11v16M23 11v14" stroke="#777" strokeWidth=".9" strokeDasharray="1.500 .6" />
      <path d="M0 10h84M30 10v36M42 10v36M54 10v36M66 10v36" stroke="#e2e2e2" strokeWidth=".6" />
    </svg>
    <svg className="absolute -bottom-[17px] right-[2px] size-[27px]" viewBox="0 0 72 72">
      <rect width="72" height="72" rx="16" fill="#fff" />
      <OfficeMark letter="X" c={XL} />
    </svg>
  </div>
);

const Trash = () => (
  <svg className="-mt-[5px] h-[84px] w-[64px]" viewBox="0 0 64 84">
    <defs>
      <linearGradient id="bin" x1="0" y1="0" x2="1" y2="0">
        <stop offset="0" stopColor="#c9c7ce" />
        <stop offset=".5" stopColor="#e6e5e7" />
        <stop offset="1" stopColor="#bebcc4" />
      </linearGradient>
    </defs>
    <path d="M3 12L12 3l8 3 6-5 8 6 7-6 8 6 6-2 6 8-7 8H9z" fill="#e9e9e9" />
    <path d="M14 10l5-5 4 6zM24 6l6 4-4 4zM40 5l8 6-9 5zM51 8l5 4-4 4zM20 13l8 5-9 2zM32 6l4 6-5 1z" fill="#4a4d52" />
    <path d="M27 11l6-3-1 8zM36 13l5 3-6 3z" fill="#5f91c8" />
    <path d="M44 13l4 2-5 4zM14 15l4 2-4 2z" fill="#c8743b" />
    <path d="M0 12q4 8 32 8t32-8l-7 62q-1 9-25 9T7 74z" fill="url(#bin)" opacity=".94" />
    <path d="M0 12q4 8 32 8t32-8" fill="none" stroke="#f7f7f8" strokeWidth="1.500" />
    <path d="M10 76q6 5 22 5t22-5" fill="none" stroke="#fff" strokeWidth="2" opacity=".7" />
  </svg>
);

const APPS = [
  [Finder, true], [Launchpad], [SafariIcon, true], [Messages], [Mail], [Maps], [Photos], [FaceTime], [Calendar],
  [Contacts], [Reminders], [Notes, true], [TV], [Music], [Podcasts], [News], [AppStore], [Settings],
];
const RECENT = [[GitHubIcon, true], [Excel, true], [Word, true], [Xcode, true], [Simulator, true]];
const FILES = [[DocxFile], [GitThumb], [SheetThumb], [Trash]];

function DockGroup({ items }) {
  return items.map(([Icon, running], i) => (
    <div key={i} className="flex w-[97px] shrink-0 flex-col items-center">
      <div className="mt-[13px] flex h-[80px] items-center"><Icon /></div>
      {running && <span className="mt-[13px] size-[8px] rounded-full bg-[#10004a]" />}
    </div>
  ));
}

function Dock() {
  return (
    <div className="ml-[80px] mt-[8px] flex h-[120px] w-[2720px] rounded-[34px] border-2 border-white/20 bg-[linear-gradient(96deg,#5f5784_0%,#60588c_15%,#66569c_30%,#6b56b0_45%,#7156bd_57%,#8f56d4_64%,#9a56e0_70%,#9856e0_78%,#8458d8_86%,#7859c2_94%,#7657b4_100%)] bg-clip-padding pl-[4.500px]">
      <DockGroup items={APPS} />
      <div className="flex w-[45px] shrink-0 justify-center"><span className="mt-[14px] h-[88px] w-[2px] bg-[#5a22ac]" /></div>
      <DockGroup items={RECENT} />
      <div className="flex w-[43px] shrink-0 justify-center"><span className="mt-[14px] h-[88px] w-[2px] bg-[#5a22ac]" /></div>
      <DockGroup items={FILES} />
    </div>
  );
}

export default function App() {
  return (
    <div className="relative isolate flex h-[1800px] w-[2880px] flex-col overflow-hidden bg-[linear-gradient(90deg,#0a0333_0%,#0d0442_22%,#13064f_45%,#1d0865_66%,#48139a_69%,#471296_78%,#330d86_86%,#280a70_100%)] font-['Inter',sans-serif]">
      <div className="absolute inset-x-0 top-0 -z-10 h-[160px] bg-[linear-gradient(90deg,#3a0f93_0%,#5d1796_10%,#6e5580_30%,#6e5580_70%,#6a1d95_100%)]" />
      <div className="absolute left-[42px] top-[50px] -z-10 h-[1614px] w-[2813px] rounded-[18px] bg-[#5580c8]" />
      <div className="absolute left-[42px] top-[50px] -z-10 h-[1614px] w-[2796px] rounded-[18px] border-b-2 border-[#8e8e90] bg-[linear-gradient(90deg,#dedbe0_0%,#dad7dc_20%,#dad7dc_80%,#e2dfe4_81%)]" />
      <MenuBar />
      <div className="mt-[12px] flex h-[1602px] shrink-0 flex-col overflow-hidden rounded-[20px] shadow-[0_0_3px_rgba(0,0,0,0.6),0_14px_40px_rgba(0,0,0,0.55)]">
        <Toolbar />
        <TabBar />
        <Page />
      </div>
      <Dock />
    </div>
  );
}
